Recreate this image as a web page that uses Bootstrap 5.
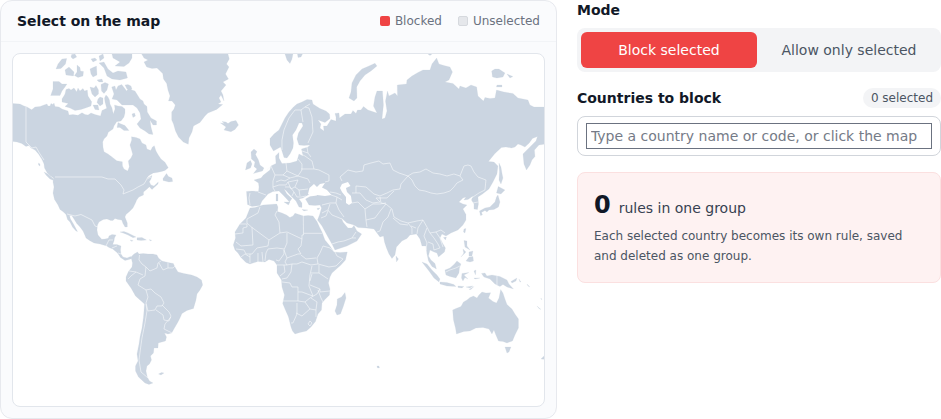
<!DOCTYPE html>
<html lang="en">
<head>
<meta charset="utf-8">
<meta name="viewport" content="width=device-width, initial-scale=1">
<title>Country rules</title>
<link href="https://cdn.jsdelivr.net/npm/bootstrap@5.3.0/dist/css/bootstrap.min.css" rel="stylesheet">
<style>
  body { font-family: "DejaVu Sans", sans-serif; font-size: 14px; line-height: 20px; color: #111827; background: #fff; }
  .page-grid { display: grid; grid-template-columns: minmax(0, 153fr) minmax(0, 100fr); gap: 20px; align-items: start; }
  .panel { background: #fafbfd; border: 1px solid #e7e9ee; border-radius: 12px; }
  .panel-head { padding: 10px 16px; border-bottom: 1px solid #f2f4f7; }
  .heading { font-size: 14px; line-height: 20px; font-weight: 700; margin: 0; }
  .legend-list { font-size: 12px; color: #6b7280; gap: 16px; }
  .legend-list li { gap: 5px; }
  .swatch { width: 10px; height: 10px; border-radius: 2px; background: #ef4444; }
  .swatch-off { background: #e5e7eb; border: 1px solid #d6d9de; }
  .map-pad { padding: 11px; }
  .map-frame { background: #fff; border: 1px solid #e2e6ec; border-radius: 8px; overflow: hidden; }
  .map-frame svg { display: block; width: 100%; height: auto; }
  .land { fill: #cbd5e1; stroke: #cbd5e1; stroke-width: .2; stroke-linejoin: round; }
  .sea { fill: #fff; }
  .borders { fill: none; stroke: #f8fafc; stroke-width: .6; stroke-linejoin: round; }
  .segment { background: #f3f4f6; border-radius: 8px; padding: 4px; gap: 4px; }
  .segment .btn { font-size: 14px; line-height: 20px; padding: 8px 4px; border: 0; border-radius: 6px; color: #4b5563; }
  .segment .btn.active { background: #ef4444; color: #fff; }
  .count-pill { font-size: 12px; line-height: 20px; padding: 0 8px; background: #f3f4f6; color: #4b5563; }
  .picker { border: 1px solid #d1d5db; border-radius: 8px; padding: 6px 8px; }
  .picker input { display: block; width: 100%; height: 26px; padding: 0 4px; border: 1px solid #6b7280; border-radius: 0; font-size: 14px; background: #fff; }
  .picker input:focus { outline: none; }
  .picker input::placeholder { color: #757b87; opacity: 1; }
  .summary { background: #fef2f2; border: 1px solid #fbe0e0; border-radius: 8px; padding: 16px; color: #374151; }
  .summary strong { font-size: 24px; line-height: 32px; color: #111827; }
  .summary p { font-size: 12px; line-height: 20px; margin: 5px 0 0; color: #4b5563; }
</style>
</head>
<body>
<main class="page-grid">
  <section class="panel" aria-labelledby="map-title">
    <header class="panel-head d-flex justify-content-between align-items-center">
      <h2 class="heading" id="map-title">Select on the map</h2>
      <ul class="legend-list list-unstyled d-flex mb-0">
        <li class="d-flex align-items-center"><span class="swatch"></span>Blocked</li>
        <li class="d-flex align-items-center"><span class="swatch swatch-off"></span>Unselected</li>
      </ul>
    </header>
    <div class="map-pad">
      <div class="map-frame">
        <svg viewBox="13 54 531 352" role="img" aria-label="World map">
          <g class="land">
            <!-- North and Central America -->
            <path d="M12 103.500L20 104L24 106L27 107L31.700 109.700L35 107L40 106.500L44 105L47 104L48 106L50 106L51 103.500L53 104.500L54 103L55 106.500L59 107L62 109L68 111L69 115L73 114.500L78 115.300L82 112.700L85 114.500L88 115L91 113L95 114.500L100.500 116L102 110.500L106.700 108.300L105 102L104.500 98L106 95L108 97L109.500 100L110 104L112 108L113.300 114L115 109L114.500 105L118 106L122 106.500L125 109L125 113L124 117L121 121L116.700 121.700L114 126L113 129L108.300 132.300L107 136L104 139L102.700 142L103 147L104 151.700L108 154L111.700 156.700L116.700 160.700L122.300 161.700L122.500 166L124 169L127.700 171L129.300 166.700L128.300 161L131 158L132.700 154.300L131.500 150L130 145L131.700 140L131.500 136.700L136 137.500L140 139L142 143L146 145L147 149L150.700 150.500L152.500 147L154.300 145.700L156 151L158.300 155L161 159L165 162.300L168.300 167.700L165 170.500L161.700 171.500L157 172.500L153.300 173L149 175.500L146 179L152 175.500L151 179L149.300 181.700L151 185L154 186L158.300 182L158 184L152 189.500L150.500 188L149.500 186.700L146 190L143.500 192L143.500 195L139 197L136.700 200L135.500 203L134 206L133 208L129.300 211.700L126 214.500L125 217L127.300 223L127.300 227L125 227L123 223.500L121.700 220L118 219.500L115 218.500L113 220.500L110.700 220.500L107 219L103.300 219.500L99 222L97.500 225L97 230L98 235L101.700 239.300L105 239L108.300 238.300L109 236L112 234.500L116 235L114.500 238L114 241L112.700 244.500L117 244.500L121 246L120.500 250L121 254L123 257L127 258L130.500 256.500L132 258.500L129 259.500L125 260.500L120.500 257.500L117.500 253L112.700 249L109 247.500L106.700 246L100 244L94 243L89.500 240.500L86 238L85 235.500L83 231L80 227L76.700 223.500L74 219L71.700 215.500L69.500 215.500L70.500 219L73.500 224L77.500 231.500L76 231L72.500 227L70 222L67.500 219.500L66 214.500L63.500 212L60 209.500L58 205L54.500 199.500L53 193L54 187L53 182L53.500 178L50 175.500L47 172.500L44.500 168L44 164L42 159.500L38.500 154L35 150L31 148L29 145.500L26 146.500L21.700 143.500L17 142L12 141.500Z"/>
            <path d="M44 172L48 174L53 178.500L55 181L50 179L46 175ZM38.500 163L40 164L40 166L38.500 165Z"/>
            <path d="M163 178.500L166.500 173.500L168.500 176.500L172 178L172.700 181.500L169 182L163 180.500ZM120 232L124 231.500L128 233L132 235L136 237L133 237.700L128 235L123 233ZM137 237.700L142 237.500L146.500 240L141 240.500L137 240ZM130 240L133 240.500L132 241.500ZM149 239.800L151.500 240L151 241Z"/>
            <!-- Arctic islands -->
            <path d="M53 81.500L59 81.500L62 84L67 84L65 87L62 91L60 95.500L56 95.500L50.700 95.500L53 89ZM66 89.500L69 88.500L71 90L74 88L76.700 91.700L78 88L80 91L83 88.500L84.500 91L87.300 90L88 96L91.700 101.700L91 106L87 107.500L81 109.500L75 110.500L70 108L65 106.500L68.300 103.500L62 102L62 99L65 94ZM56 69L58 64L62 59L66.700 58.500L65.500 64L61 68.500ZM65 70L69 67L71 69L74 72L73.500 76L66 75ZM77 65L80 67.500L80.500 71L83.500 71.500L83 76L78 77.500L74.500 75.500L77 72ZM71.700 54.500L75 54L76.700 57L73 59L71 57ZM90 69L93 67.500L96.500 66L97 75L93 77L91 74ZM91 59L95 58L97 60L93 62ZM90 87L94 88L96 85.500L98.500 90L98.500 94L95 97L92 94ZM101 84.500L105 82.500L108.500 84L107 90L104 93.500L101.500 91ZM100 97L103 98L103 104L100 106L97 102.500L98 99ZM93 105L98 105L99 110L95 109.500ZM99 56L103 54L104 58L100 61ZM99 63L104 62L108 69L113 73L118 71L126 72L127.500 78L120 80L112 79L107 76L104 68ZM97 80L102 79L103 82L99 82ZM112 54L132 54L132 58L129 63L124 66.500L115 66L120 62L113 58Z"/>
            <path d="M111.700 87L115 86L116 90L118 86L121.700 84.500L126.700 91L129 87L132 90L135 91L140 99L143 101L144 104L147 106.500L147.300 112L151 118L156.500 121L156.500 125L153 125L150 120L151 127L153 134.500L149 134L145 131L140 128L137 124L141 119L140 113L137 108L133 105L127 105L122 105L117 100L112 99L114 94ZM125 85L128 84.500L131 86L132 89L127 89ZM132 114L134.500 113L135.500 116L133 117.500ZM118 122.500L120 123.500L125 125.500L129 130.500L124 130.500L120 127.500L117 127.500Z"/>
            <!-- Greenland and Iceland -->
            <path d="M141.700 54L144 58L148 60L144 62L146.700 67L152 68.500L157 68L162.700 73.500L163.500 79L166.700 83.500L168 90L170 96L168.500 101L172 101L175.300 105L174 109L171.700 112L171.700 120L173.500 124L175.500 131L178.500 137L183.300 142L188.300 144.300L189 138L192 132L193.500 126L200 122.500L205 116L208 113L216.700 109.500L222.700 104.500L218 104L221 102L219 98L221 95L224 101L223 95L221 91L226 85L223 82L228.500 79L225.500 74L229 67L226.500 64L229.300 59L228 54ZM220.500 123L224.500 123.500L222 121.500L226 122L228 123.500L231 121.500L236 120.500L238.500 125L235 129.500L231 131.700L224 130L226 127Z"/>
            <!-- South America -->
            <path d="M131 257L134 254L137.500 252L139 254L143 253.500L148 254L153 254L157 255L158.500 258L162 261L168 262.500L173.300 263.500L175.500 268L178 272L184 273.500L191.700 275L197 277L201.500 280L202.700 285L200 290L197 294L196 300L193.500 308.500L187 310.500L182 313.500L180 318L178 322L174.500 328L171.700 333L168 334L164.500 333L166.500 337L165.500 341L158.300 343L158 348L154 348L153.500 353L150.500 356L151.500 360L149.500 364L147 366L146 371L147.300 377L149.500 381L153 383L149 384.500L145 383L138.500 377L135.500 371L135.500 366L138 361L137 354L139 344L140 337L142 328L143.500 317L144.500 304L140 300L135.500 296L131 288L126 281L126 277L128.500 271.500L132 267L132.500 263ZM158.500 374L161.500 372.500L164 373L161 375Z"/>
            <!-- Africa and Madagascar -->
            <path d="M250 208L255 207.500L263 205L270 204.500L276.700 204L278 207L277.500 211.500L282 213L286.500 215L290 217.500L293 216L295 213.300L299 214.500L303.500 216L308 215.500L313 216L317 221.500L319.500 227L322 232L325 240L330 246L334 252L340 252.500L347.300 252L345.500 260L341 265L336.500 269L332 273L330 277L328.500 283L330 289L329.500 295L325 299.500L322 303L321.500 310L318 314L315.500 321.500L311 327L306.500 331L300 332.500L295 334L292.500 331L291 327L288.500 317L285 309L282.700 303.500L284.500 295L282 287L281.500 280L277 273L277 265L274 261L269 259.500L265 262L258 261.500L250 264L246 262.500L241 257.500L238 253L235 250L233.300 245L235.500 238L235 232L240 224L246 218ZM345 292.500L346 298L343.500 306L340.500 314L337 315L335 311L337 305L337.300 299L341.500 297Z"/>
            <!-- Europe and Asia -->
            <path d="M270 138.500L274 134L279 130L282 124L285 118L289 112L293.500 107L297 104L302 102L307 99.500L312 100L313 104L316 106L320 108.500L326 111L329.500 114L330 118.500L325 122.500L318 120L321 124L320 128L324 131L323.500 126L327 126L331 119.500L336 121L336 117L335 113.500L339 113L339.500 118L345 114L351 114L353 110.500L356 113.500L357.500 110L361 110L363.500 106.500L368 110L377 113L373.500 106L375 97L377 91L382.500 91L383.500 105L382 119L385 118L387 111L385.500 101L387.500 91L389 96L395 93L397.500 96L397.300 85L406.500 84L407 80L412 76L418 72.500L423 70L430 70L432 64L436.700 58L439 64L444 65.500L450 67L452.500 72L449 80L445 82L453 83.500L459 89L460 86L466 88L471 85L476.700 87L478 96L483.500 101L485 97.500L490 98.500L495 98L496.500 90L504 92L513 93.500L518 98L528 100L530 105L534 107L545 107L545 144L539 145L534.500 150L535 156.500L532 160L530 165L526.500 170L524 164L523 154L528 149L532 145L536 141L537.500 136.500L532.500 138.500L529.300 143L525 147L521 145L518 144L515 147L511.500 148L506 147L501.500 147.500L495 153.500L488.500 161.500L494 162L498 166L497 174L493 182L489 189L482.500 194L478 197L478.500 204L477.500 209.500L474 209L474 204L471.500 200L473 196L468 199.500L464 200L466 197L463 198L459 202L463 204L467 205L463 209L466 214.500L466 220L463 225L458 230L451 233L446 236L442 234L440 238L442.500 243L445.500 248L444.500 252L438.500 257L437 253L434 252L430 250L428.500 256L431 260L435 263.500L436.500 269L432 266.500L428.500 261L427 254L426 246L422 246L420 239L416.500 234L410 235L407 238.500L402 241L396.500 247L395 255L392 258.500L389 254L386.500 248L384.500 242L383.500 236L380 237L377 233L374 229L366 228L358 227.500L354 225L347 223L341.500 218L343 222L348 228L352 228L354 225.500L357 231L361.700 234L357 241L347 246L335 250L332.500 245L328 237L322 226L317.500 220L319.500 215L321.500 208L320 205L315 205.500L309 205L305.500 199L310 196.500L317 195.500L317 191L308 195L303 198L299 199L302 203L302 207.500L299 207L296 201L291 196L286 190.500L284 189L287 194L292 198.500L289.500 202L284 196L279 191L273 191.500L268 194L265.500 197L262 201L260 205.500L252 206.500L247.500 204.500L247 198L246.500 191.500L252 191L258.500 191.500L259 187L258.500 183L254 180L261 178L263.500 175L270 170L271 166L276 163.500L275.500 156L279 152.500L279 158L282 163.500L290 163L297 161L299 154L303 156L301.500 149L308 147L310 145L304 145.500L299 145L297 139L298.500 133L303 126L302 123L299 123L296 130L292.500 135L293.500 143L293 148L290 154L287 158L284 157.500L282 151L280.500 147L273.500 151L270 145Z"/>
            <path d="M251 152L254 149L257 151.500L255.500 154.500L258.500 160L260 165L264 168L262.500 171L253.500 173.500L257 169L254 166.500L255 162L251.500 159ZM247 163L250.500 160.500L252 164L250.500 168L245.500 170ZM276 194L278 194L278 201L276 201ZM284 202L290 202L288.500 205ZM302 209.500L308 210L304 211ZM317 208.500L320 208L318 210ZM285 54L293 54L292 59L290 63.500L287 60ZM297.500 54L302.500 54L301 57L298 57.500ZM375 63.300L377 66L371 71L365 75L360 81L356.700 87L357 98L354 101L349 98L351 92L352 83L356 75L362 69L369 66ZM428 54L432 54L430 55.500ZM491.700 71L495 69L499 69L505 73L503 77L497 78L492.500 77ZM507 74L513 76.500L510 78ZM497 85L502 85L502 87L496.500 87ZM499 163L501 167L502 173L503 178L501 184L499 180L499.500 172ZM498.300 186.500L505 190L501 194L496.500 193ZM498 195L500 202L498.500 207L494 209.500L489 210L487 212L485 210.500L481.500 212.500L482.500 215L480.500 215.500L479.500 211L485 208L490 207L495 202L496.500 197ZM464 229L466 228.500L465 233L463.500 232ZM443.500 237.500L446.500 237L445.500 240ZM396 256L398.500 259L396.500 262Z"/>
            <!-- South-east Asia -->
            <path d="M464 240.500L467 241L467 246L470 250L465 247ZM463 249L466 252L464 254ZM469 252L473 251L472 256L469 256ZM466 261L469 257L473 256.500L473.500 261L470 262ZM461 257L464 253L464 254ZM422 262L427 264L432 270L437 275L440 279L439 282L434 278L429 271ZM440 282L447 282.500L454 284.500L456 286.500L447 286L440 284ZM458 286L464 286.500L462 288L458 287.500ZM466 287L473 286L470 288ZM469 289.500L474 286.500L471 289.500ZM445 270L450 268L454 264.500L457 261L461 264L459.500 268L459 273L456 278L450 276.500L446 275ZM462 273.500L469 272.500L464 275L468 279L465 277.500L463 281L461.500 278ZM474 271L476 270L475.500 275ZM474 278L480 278L475 279ZM481.500 273.500L485 273L487 276L492 275L500 276.500L507 280L509 284L513.500 289L507 287L503 284.500L500 286.500L495 284L490 279L484 277ZM511 281.500L517 278L516 281L512 283ZM519 279L521 282L520 282ZM527 284L530 287L528 286ZM537 306L541 309.500L539 308.500ZM541 298L542 300L541 299Z"/>
            <!-- Australia and the southern islands -->
            <path d="M452.700 310L456 308.500L461 306.500L463.500 302L467 300L470 297.500L473.500 296L477 298L479 295L482 292L486 293L490.700 292.700L488.500 298L493 301.500L496.500 303L499 298L500.700 289.500L503 293L505 299L507 304.500L512 309L515 314L518.500 319L518.500 328L515 335L512.500 341L507 343L503 341.500L498.500 341L495.500 334L494 330L492 334L489 329L483 327.500L476 328L470 331L464 331.500L456.500 334L455.500 328L453.500 320ZM505 347L511 347L509 352L507 353ZM545 355L541 359L545 359.500ZM377 366L379 366L379.500 368L377.500 368Z"/>
          </g>
          <!-- Black Sea, Caspian Sea -->
          <path class="sea" d="M308 194L309.500 188L314 184L317 187L320 184L325 183L322 187.500L327 190L331.500 195L325 196L317 195L311 196ZM340 188L342 184L348 182L350.500 186L346 188L347 192L351 196L352 203L349 205L346 203L346 197L342 192Z"/>
          <g class="borders">
            <path d="M26 107V142L29 145L32 148L36 147L40 154L44 160M55 177H102L108 179L115 179L121 185L124 190L123 194L133 190L138 187L144 184L147 179L151 177M67 214L75 216L81 214.500L86 217L92 220L95 226L98 227M106 246L109 240L113 240M112 248L117 246M118 253L121 254"/>
            <path d="M139.500 255L139 260L142 264L146 267L145 276M146 267L150 271L157 268L158 263L161 261M159 263L163 270L168 268L173 268L175 266M168 263L168 268M145 276L140 279L138 285L146 290L148 297L146 303M128 279L131 276L136 272L143 275M129 271L136 272M146 290L151 289L155 293L161 297L164 303L162 306L157 306L155 310L148 311L146 303M162 305L169 312L171 316L169 321L164 320L163 315L156 310M171 317L165 324L164 329L172 333M146 304L147 311L145 323L142 338L141 345L139 360L141 372L148 378"/>
            <path d="M260 207L258 213L247 219V223L252 227.500L269 240L280 233L279 222L275 215L277 211M240 224H247V227L243 228V233L235 234M252 227L253 245L241 246L236 242M280 233L287 232L302 239V235H303.500V233.300L303.300 216M303.500 233.300H322M302 239L301 246L298 249L301 254L298 254L287 258L284 250L287 243V233M269 240L268 246L257 248L252 254H246L244 250L236 249M284 249L277 248L268 249L266 253L265 261M262 252L263 262M258 253V262M250 254V263M241 257L245 254L250 257M284 250L284 254L279 261L276 260M287 258L285 262L287 265L292 264L297 264L302 262L311 265L318 264L317 258L320 253L323 246L330 248L335 252L337 256L343 259L336 266L329 267L318 264M301 255L306 259L316 258M277 265H284L287 265M292 264L291 272L287 278L282 279M284 265L285 272L280 276M282 282L290 283L292 287H298V292L302 292L310 295L313 296L311 291L309 286L310 275L312 266M311 273H319L319 265M319 273L328 279M310 285L320 289M312 274L310 281M320 289V292L330 291M298 292V301L283 301M298 301L305 302L310 298L317 294L320 289M318 290L321 298L323 302M305 302L310 309L316 310L317 302L311 298M297 303V314L293 323L291 323M296 313L302 316L310 309M316 310L316 317M310 321L312 323L310 326L308 324Z"/>
            <path d="M282 150L282 140L284 130L289 118L295 110L301 110L303 122M301 110L305 107L309 108L312 117L313 132L308 143M305 107L310 104M301 154L305 156L312 161L314 169L319 170L329 175L329 181L325 182M301 169L314 169M307 147L308 153L302 151M308 153L311 157M298 159L302 164L302 170L298 176L287 171L286 163M287 171L283 175L290 178L298 176L308 179L310 183M290 178L285 181L281 180L276 182M271 166L275 175L273 181L273 188L275 191M283 175L275 175M270 167L267 170M273 187L279 185L286 185L288 182L298 180L295 187L299 190L308 189M285 187L290 187L294 192L297 197L301 197L306 196M288 182L291 189L295 187M299 190L300 196M294 192L292 196M250 193L249 198L250 205M258 192L266 195"/>
            <path d="M330 192L336 193L341 195M331 195L337 197L342 200M337 197L336 203L339 210L344 217M322 205L330 203L336 203M330 204L328 210L322 213M328 210L332 215L342 219M321 218L326 216L328 211M332 244L338 242L344 241L352 238L356 232M356 238L352 238M342 181L340 177L348 170L356 172L363 171L364 165L371 163L379 161L383 164L390 163L393 170L399 173L408 176L401 184L400 189L393 190L387 193L380 196L374 194L366 187L356 186L356 193M352 193L360 193L366 200L373 203L380 202L376 198L387 198L394 191M352 203L358 202L365 209L366 220L367 227M365 209L373 204L380 204L386 203M366 220L375 218L381 210L386 204M380 197L381 203L386 204L392 209L394 217L401 221L408 223L417 221L423 220L427 227L430 233L436 232L441 230L445 233M393 218L400 224L408 225M391 209L388 217L383 222L380 231L377 232M408 223L412 228L412 234M411 226L416 228M423 220L418 228L417 234M427 228L424 236L427 243L426 250M430 233L434 238L438 244L440 248L434 250L433 244L428 242M436 232L440 238L443 247"/>
            <path d="M408 176L413 173L420 172L426 169L433 173L440 174L447 176L454 174L460 176L463 180L457 183L454 187L450 191L444 193L437 194L431 193L425 191L419 190L415 186L412 180L408 176M460 176L464 166L468 165L471 166L474 172L478 177L486 180L485 190L479 193L470 199M473 203L478 202M446 272L450 270L456 268L460 266M497 276V285"/>
          </g>
        </svg>
      </div>
    </div>
  </section>

  <form class="d-flex flex-column gap-3">
    <section class="d-flex flex-column gap-2" aria-labelledby="mode-title">
      <h2 class="heading" id="mode-title">Mode</h2>
      <div class="segment d-flex" role="group" aria-labelledby="mode-title">
        <button type="button" class="btn active w-50" aria-pressed="true">Block selected</button>
        <button type="button" class="btn w-50" aria-pressed="false">Allow only selected</button>
      </div>
    </section>
    <section class="d-flex flex-column gap-2">
      <div class="d-flex justify-content-between align-items-center">
        <label class="heading" for="country">Countries to block</label>
        <span class="count-pill rounded-pill">0 selected</span>
      </div>
      <div class="picker">
        <input type="text" id="country" placeholder="Type a country name or code, or click the map">
      </div>
    </section>
    <section class="summary">
      <div class="d-flex align-items-baseline gap-2"><strong>0</strong><span>rules in one group</span></div>
      <p>Each selected country becomes its own rule, saved and deleted as one group.</p>
    </section>
  </form>
</main>
<script src="https://cdn.jsdelivr.net/npm/bootstrap@5.3.0/dist/js/bootstrap.bundle.min.js"></script>
</body>
</html>
